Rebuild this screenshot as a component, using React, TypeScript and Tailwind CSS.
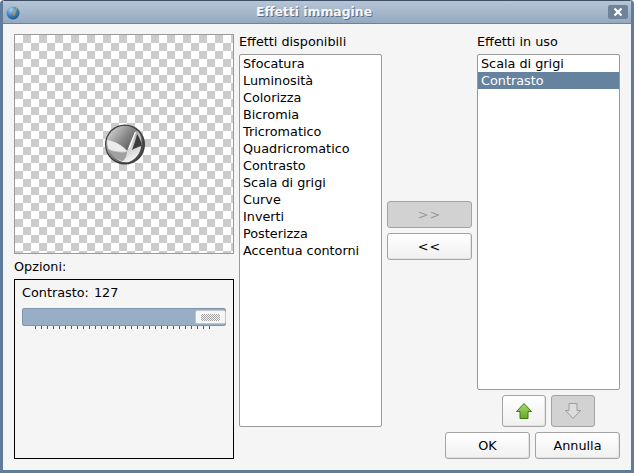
const available = [
  "Sfocatura",
  "Luminosità",
  "Colorizza",
  "Bicromia",
  "Tricromatico",
  "Quadricromatico",
  "Contrasto",
  "Scala di grigi",
  "Curve",
  "Inverti",
  "Posterizza",
  "Accentua contorni",
];

const ticks = Array.from({ length: 30 });

function Btn({ label, disabled, className }: { label: string; disabled?: boolean; className: string }) {
  return (
    <div
      className={`flex items-center justify-center rounded-[3px] border border-[#a3a3a3] ${
        disabled
          ? "bg-[#d2d2d2] text-[#9a9a9a]"
          : "bg-gradient-to-b from-white to-[#f0f0f0] shadow-[inset_-1px_-1px_0_#e4e4e4] text-black"
      } ${className}`}
    >
      {label}
    </div>
  );
}

function ArrowBtn({ up }: { up: boolean }) {
  return (
    <div
      className={`flex h-[32px] w-[44px] items-center justify-center rounded-[3px] border border-[#a3a3a3] ${
        up ? "bg-gradient-to-b from-white to-[#f0f0f0] shadow-[inset_-1px_-1px_0_#e4e4e4]" : "bg-[#d2d2d2]"
      }`}
    >
      <svg width="18" height="18" viewBox="0 0 18 18">
        {up ? (
          <>
            <defs>
              <linearGradient id="up" x1="0" y1="0" x2="0" y2="1">
                <stop offset="0" stopColor="#a9d96c" />
                <stop offset="1" stopColor="#66a82a" />
              </linearGradient>
            </defs>
            <path d="M9 1.5 L16.5 9.5 H13 V16.5 H5 V9.5 H1.5 Z" fill="url(#up)" stroke="#3c7c0e" strokeLinejoin="round" />
          </>
        ) : (
          <path d="M5 1.5 H13 V8.5 H16.5 L9 16.5 L1.5 8.5 H5 Z" fill="#dcdcdc" stroke="#9c9c9c" strokeLinejoin="round" />
        )}
      </svg>
    </div>
  );
}

function Logo() {
  return (
    <svg width="40" height="41" viewBox="0 0 40 41" className="ml-[1px]">
      <defs>
        <linearGradient id="cap" x1="0.1" y1="0" x2="0.85" y2="0.6">
          <stop offset="0" stopColor="#dcdcdc" />
          <stop offset="0.5" stopColor="#8a8a8a" />
          <stop offset="1" stopColor="#4a4a4a" />
        </linearGradient>
        <linearGradient id="low" x1="0.1" y1="0" x2="0.6" y2="1">
          <stop offset="0" stopColor="#8c8c8c" />
          <stop offset="1" stopColor="#f2f2f2" />
        </linearGradient>
      </defs>
      <circle cx="20" cy="20.5" r="20" fill="#3a3a3a" />
      <circle cx="20" cy="20.5" r="18.8" fill="url(#cap)" />
      <path d="M2 16 C10 17 18 21 22 27 C25 20 28 12 31 7 C33 6 35 10 36 13 C38 24 34 34 24 38 C14 40 4 32 2 16 Z" fill="url(#low)" />
      <path d="M2 16 C10 17 17 22 22 27 C16 28 8 27 3.5 25 C2.5 22 2 19 2 16 Z" fill="#ececec" />
      <path d="M4 26 C9 28 16 29 22 28 C22 32 20 35 18 37 C11 36 6 31 4 26 Z" fill="#a0a0a0" />
      <path d="M23 25 L30 7.5 L31 8 L25 24 Z" fill="#ffffff" />
      <path d="M32 10 C34 13 37 18 36.5 22 C33 23 30 24 27 26 C29 20 31 15 32 10 Z" fill="#3c3c3c" />
    </svg>
  );
}

export default function App() {
  return (
    <div className="flex h-[473px] w-[634px] flex-col overflow-hidden rounded-t-[4px] border-x-[3px] border-b-[3px] border-[#5f7c9b] bg-[#f5f5f5] font-['DejaVu_Sans',sans-serif] text-[12.8px] text-black">
      {/* title bar */}
      <div className="-mx-[3px] flex h-[24px] shrink-0 items-center border-t border-b border-t-[#3c4e63] border-b-[#6b849e] bg-gradient-to-b from-[#b6c5d6] to-[#94a9c0] px-[6px]">
        <svg width="14" height="14" viewBox="0 0 14 14" className="mt-[2px] shrink-0">
          <defs>
            <radialGradient id="globe" cx="0.35" cy="0.25" r="0.85">
              <stop offset="0" stopColor="#a8d0ee" />
              <stop offset="0.55" stopColor="#3d7fb8" />
              <stop offset="1" stopColor="#1c4a78" />
            </radialGradient>
          </defs>
          <circle cx="7" cy="7" r="6.5" fill="url(#globe)" />
          <path d="M7.5 9.5 L10.5 2.5" stroke="#d99a2b" strokeWidth="1.3" />
        </svg>
        <span className="flex-1 text-center text-[12.4px] font-bold text-[#f4f6f8] [text-shadow:1px_1px_0_#5b6f86]">
          Effetti immagine
        </span>
        <div className="flex h-[14px] w-[20px] items-center justify-center rounded-[2px] bg-[#6e8299]">
          <svg width="10" height="10" viewBox="0 0 10 10">
            <path d="M1.5 1.5 L8.5 8.5 M8.5 1.5 L1.5 8.5" stroke="#fff" strokeWidth="2.2" />
          </svg>
        </div>
      </div>

      <div className="flex flex-1 gap-[5px] pl-[11px] pr-[11px] pt-[10px]">
        {/* left column */}
        <div className="flex w-[220px] flex-col">
          <div className="flex h-[220px] items-center justify-center border border-[#9a9a9a] bg-white bg-[conic-gradient(#cccccc_25%,#ffffff_0_50%,#cccccc_0_75%,#ffffff_0)] bg-[length:16px_16px]">
            <Logo />
          </div>
          <div className="flex h-[25px] items-center">Opzioni:</div>
          <div className="h-[180px] border border-black px-[7px] pt-[4px]">
            <div className="h-[17px] leading-[17px] [word-spacing:1px]">Contrasto: 127</div>
            <div className="relative mt-[7px] h-[18px] rounded-[2px] border border-[#7f94ab] bg-[#98aec4]">
              <div className="absolute right-[-1px] top-[1px] flex h-[14px] w-[31px] items-center justify-center rounded-[2px] border border-[#c4c4c4] bg-[#f6f6f6]">
                <div className="h-[7px] w-[19px] bg-[conic-gradient(#a0a0a0_25%,#f6f6f6_0_50%,#a0a0a0_0_75%,#f6f6f6_0)] bg-[length:2px_2px]" />
              </div>
            </div>
            <div className="ml-[13px] flex w-[175px] justify-between">
              {ticks.map((_, i) => (
                <div key={i} className="h-[3px] w-px bg-[#555555]" />
              ))}
            </div>
          </div>
        </div>

        {/* available effects */}
        <div className="flex w-[143px] flex-col">
          <div className="h-[20px] leading-[15px]">Effetti disponibili</div>
          <div className="h-[373px] rounded-[2px] border border-[#9a9a9a] bg-white">
            {available.map((name) => (
              <div key={name} className="h-[17px] px-[3px] leading-[17px]">
                {name}
              </div>
            ))}
          </div>
        </div>

        {/* move buttons */}
        <div className="flex w-[85px] flex-col gap-[5px] pt-[167px]">
          <Btn label=">>" disabled className="h-[27px] w-[85px] tracking-[1px]" />
          <Btn label="<<" className="h-[27px] w-[85px] tracking-[1px]" />
        </div>

        {/* used effects */}
        <div className="ml-0 flex w-[143px] flex-col">
          <div className="h-[20px] leading-[15px]">Effetti in uso</div>
          <div className="h-[336px] rounded-[2px] border border-[#9a9a9a] bg-white">
            <div className="h-[17px] px-[3px] leading-[17px]">Scala di grigi</div>
            <div className="h-[17px] bg-[#65839f] px-[3px] leading-[17px] text-white">Contrasto</div>
          </div>
          <div className="mt-[5px] flex gap-[5px] pl-[25px]">
            <ArrowBtn up />
            <ArrowBtn up={false} />
          </div>
          <div className="-ml-[32px] mt-[5px] flex gap-[5px]">
            <Btn label="OK" className="h-[27px] w-[85px]" />
            <Btn label="Annulla" className="h-[27px] w-[85px]" />
          </div>
        </div>
      </div>
    </div>
  );
}
